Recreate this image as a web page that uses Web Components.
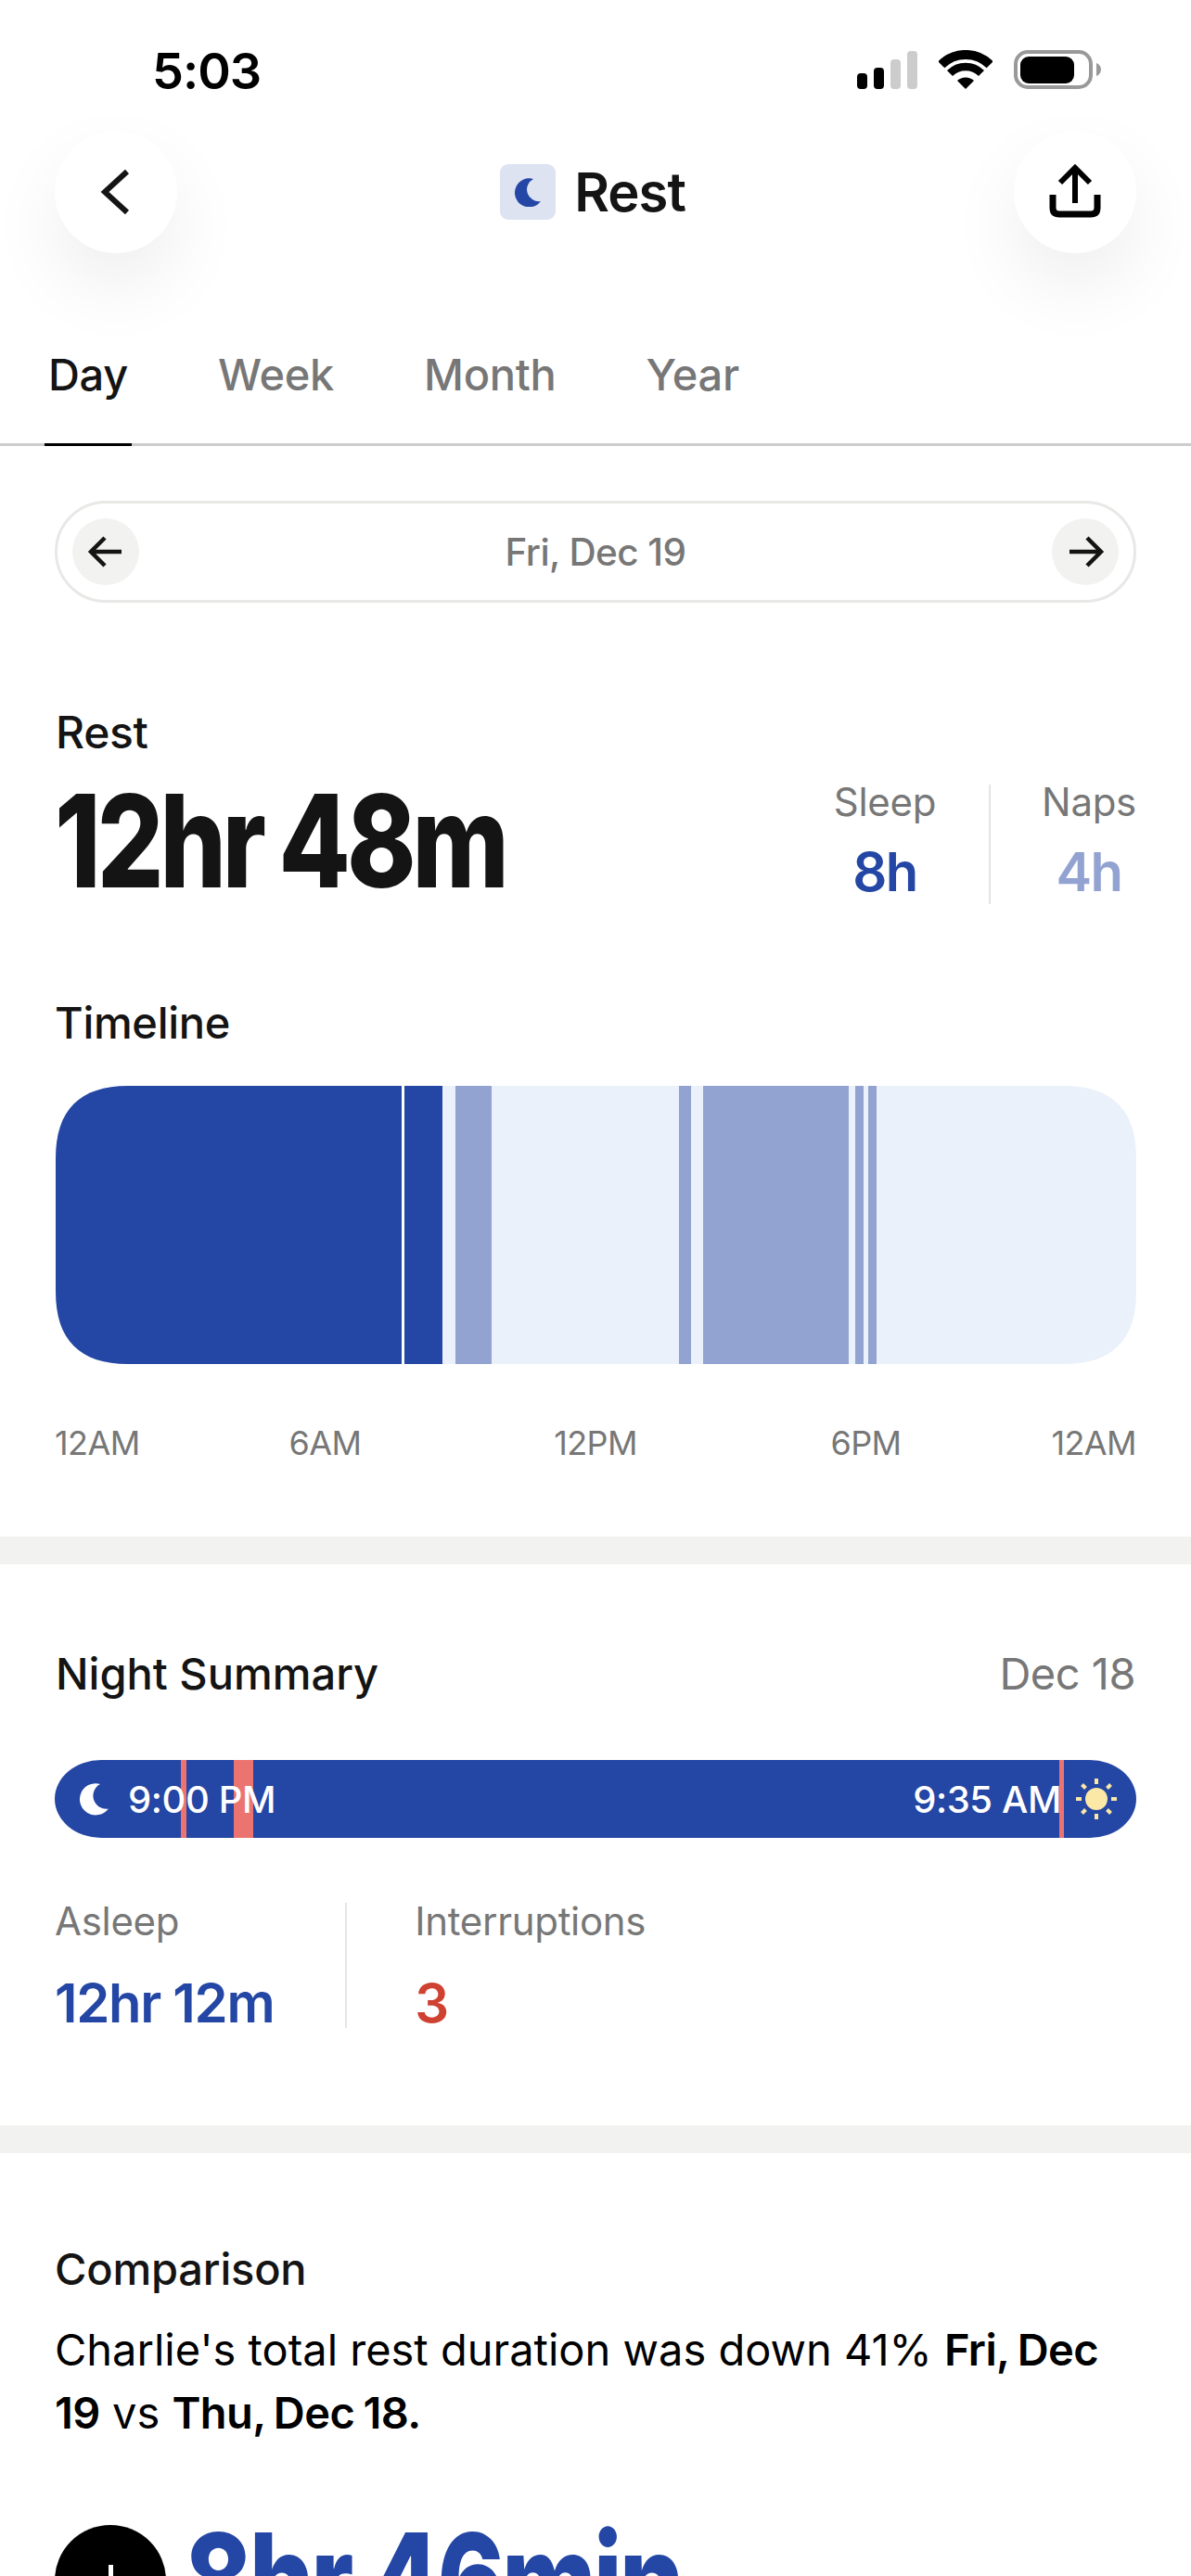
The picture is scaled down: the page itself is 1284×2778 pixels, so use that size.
<!DOCTYPE html>
<html>
<head>
<meta charset="utf-8">
<title>Rest</title>
<style>
  html, body { margin: 0; height: 2778px; overflow: hidden; background: #fff; }
  body { font-family: Inter, "Liberation Sans", sans-serif; color: #141414; }
  rest-page { display: block; }
</style>
</head>
<body>
<rest-page>
  <status-bar>5:03</status-bar>
  <nav-bar>Rest</nav-bar>
  <period-tabs></period-tabs>
  <date-pill>Fri, Dec 19</date-pill>
  <rest-summary></rest-summary>
  <band-gap></band-gap>
  <night-summary></night-summary>
  <band-gap></band-gap>
  <comparison-card>
    Charlie's total rest duration was down 41% <b>Fri, Dec</b> <b>19</b> vs <b>Thu, Dec 18.</b>
  </comparison-card>
</rest-page>

<script>
const MOON = 'M20 1A15.5 15.5 0 1 0 28 25A12.800 12.800 0 0 1 20 1Z';

class StatusBar extends HTMLElement {
  constructor() {
    super();
    this.attachShadow({ mode: 'open' });
    this.shadowRoot.innerHTML = `
      <style>
        :host { display: flex; justify-content: space-between; align-items: flex-start; box-sizing: border-box; height: 141px; padding: 48px 97px 0 164px; }
        .time { font-size: 54px; line-height: 58px; font-weight: 600; letter-spacing: -1px; color: #000; }
        .icons { display: flex; align-items: flex-start; gap: 23px; padding-top: 6px; }
        svg { display: block; }
      </style>
      <span class="time"><slot></slot></span>
      <div class="icons">
        <svg width="65" height="42" viewBox="0 0 65 42">
          <rect x="0" y="25" width="11" height="17" rx="4" fill="#000"/>
          <rect x="18" y="19" width="11" height="23" rx="4" fill="#000"/>
          <rect x="36" y="10" width="11" height="32" rx="4" fill="#ccc"/>
          <rect x="54" y="1" width="11" height="41" rx="4" fill="#ccc"/>
        </svg>
        <svg width="58" height="42" viewBox="0 0 58 42">
          <path d="M2.8 15.8A37 37 0 0 1 55.2 15.8" fill="none" stroke="#000" stroke-width="10"/>
          <path d="M12 25A24 24 0 0 1 46 25" fill="none" stroke="#000" stroke-width="8.5"/>
          <path d="M29 42L20 33A13 13 0 0 1 38 33Z" fill="#000"/>
        </svg>
        <svg width="94" height="42" viewBox="0 0 94 42">
          <rect x="2" y="2" width="81" height="38" rx="13" fill="none" stroke="#999" stroke-width="4"/>
          <rect x="7" y="7" width="58" height="29" rx="9" fill="#000"/>
          <path d="M89 14C92 15 94 18 94 21C94 24 92 27 89 28Z" fill="#999"/>
        </svg>
      </div>`;
  }
}
customElements.define('status-bar', StatusBar);

class NavBar extends HTMLElement {
  constructor() {
    super();
    this.attachShadow({ mode: 'open' });
    this.shadowRoot.innerHTML = `
      <style>
        :host { display: flex; justify-content: space-between; align-items: center; height: 132px; padding: 0 59px; }
        .round { width: 132px; height: 132px; border-radius: 50%; background: #fff; box-shadow: 0 36px 80px rgba(0,0,0,.07); display: flex; align-items: center; justify-content: center; }
        .title { display: flex; align-items: center; gap: 20px; margin-left: -6px; font-size: 58px; font-weight: 600; letter-spacing: -1px; line-height: 60px; }
        .badge { width: 60px; height: 60px; border-radius: 9px; background: #dee3f2; display: flex; align-items: center; justify-content: center; }
        svg { display: block; }
      </style>
      <div class="round">
        <svg width="132" height="132" viewBox="0 0 132 132"><path d="M78 44L54 66L78 88" fill="none" stroke="#141414" stroke-width="6"/></svg>
      </div>
      <div class="title">
        <span class="badge"><svg width="29" height="31" viewBox="0 0 29 31"><path d="${MOON}" fill="#2446a4"/></svg></span>
        <span><slot></slot></span>
      </div>
      <div class="round">
        <svg width="132" height="132" viewBox="0 0 132 132" fill="none" stroke="#000" stroke-width="6">
          <path d="M66 40V78"/>
          <path d="M50 56L66 40L82 56"/>
          <path d="M42 69V83Q42 90 49 90H83Q90 90 90 83V69" stroke-width="7"/>
        </svg>
      </div>`;
  }
}
customElements.define('nav-bar', NavBar);

class PeriodTabs extends HTMLElement {
  constructor() {
    super();
    this.attachShadow({ mode: 'open' });
    this.shadowRoot.innerHTML = `
      <style>
        :host { display: flex; gap: 89px; box-sizing: border-box; height: 208px; padding: 0 0 0 48px; border-bottom: 3px solid #ccc; align-items: flex-end; }
        .tab { font-size: 47px; line-height: 46px; color: #777; font-weight: 500; letter-spacing: -.3px; padding: 0 4px 51px; margin-bottom: -3px; border-bottom: 3px solid transparent; }
        .on { color: #141414; border-bottom-color: #000; }
      </style>
      <span class="tab on">Day</span>
      <span class="tab">Week</span>
      <span class="tab">Month</span>
      <span class="tab">Year</span>`;
  }
}
customElements.define('period-tabs', PeriodTabs);

class DatePill extends HTMLElement {
  constructor() {
    super();
    this.attachShadow({ mode: 'open' });
    this.shadowRoot.innerHTML = `
      <style>
        :host { display: flex; justify-content: space-between; align-items: center; box-sizing: border-box; height: 110px; margin: 59px 59px 0; padding: 0 16px; border: 3px solid #e8e8e6; border-radius: 55px; }
        .go { width: 72px; height: 72px; border-radius: 50%; background: #f2f2f0; }
        span { font-size: 40.500px; font-weight: 500; letter-spacing: -.6px; color: #777; }
        svg { display: block; }
      </style>
      <div class="go"><svg width="72" height="72" viewBox="0 0 72 72" fill="none" stroke="#141414" stroke-width="4.500"><path d="M53 36H21M35 21L20 36L35 51"/></svg></div>
      <span><slot></slot></span>
      <div class="go"><svg width="72" height="72" viewBox="0 0 72 72" fill="none" stroke="#141414" stroke-width="4.500"><path d="M19 36H52M38 21L53 36L38 51"/></svg></div>`;
  }
}
customElements.define('date-pill', DatePill);

class StatBlock extends HTMLElement {
  constructor() {
    super();
    this.attachShadow({ mode: 'open' });
    this.shadowRoot.innerHTML = `
      <style>
        :host { display: flex; flex-direction: column; align-items: var(--stat-align, center); }
        .label { font-size: 42px; line-height: 42px; color: #777; letter-spacing: -.3px; }
        .value { font-size: 58px; line-height: 58px; font-weight: 600; letter-spacing: var(--stat-track, -1.6px); margin-top: var(--stat-gap, 25px); }
      </style>
      <span class="label"></span>
      <span class="value"><slot></slot></span>`;
  }
  connectedCallback() {
    this.shadowRoot.querySelector('.label').textContent = this.getAttribute('label');
    this.shadowRoot.querySelector('.value').style.color = this.getAttribute('color');
  }
}
customElements.define('stat-block', StatBlock);

class TimelineChart extends HTMLElement {
  constructor() {
    super();
    this.attachShadow({ mode: 'open' });
    // [width in px, colour]
    const segs = [
      [373, '#2446a4'], [3, '#fff'], [41, '#2446a4'], [14, '#eaf1fb'], [39, '#92a3d1'],
      [202, '#eaf1fb'], [13, '#92a3d1'], [13, '#eaf1fb'], [157, '#92a3d1'], [7, '#eaf1fb'],
      [9, '#92a3d1'], [5, '#eaf1fb'], [9, '#92a3d1'], [280, '#eaf1fb']
    ];
    const bars = segs.map(s => `<i style="flex:${s[0]} 0 0;background:${s[1]}"></i>`).join('');
    this.shadowRoot.innerHTML = `
      <style>
        :host { display: block; margin-top: 46px; }
        .bar { display: flex; height: 300px; margin-left: 1px; clip-path: path('M78 0H1087C1139 0 1165 26 1165 78V222C1165 274 1139 300 1087 300H78C26 300 0 274 0 222V78C0 26 26 0 78 0Z'); }
        .ticks { display: grid; grid-template-columns: 1fr 2fr 2fr 2fr 1fr; margin-top: 68px; font-size: 36px; line-height: 34px; color: #777; letter-spacing: -.6px; text-align: center; }
        .ticks span:first-child { text-align: left; }
        .ticks span:last-child { text-align: right; }
      </style>
      <div class="bar">${bars}</div>
      <div class="ticks"><span>12AM</span><span>6AM</span><span>12PM</span><span>6PM</span><span>12AM</span></div>`;
  }
}
customElements.define('timeline-chart', TimelineChart);

class RestSummary extends HTMLElement {
  constructor() {
    super();
    this.attachShadow({ mode: 'open' });
    this.shadowRoot.innerHTML = `
      <style>
        :host { display: block; padding: 118px 59px 84px; }
        .name { font-size: 48px; line-height: 44px; font-weight: 500; letter-spacing: -.3px; padding-left: 1px; }
        .row { display: flex; justify-content: space-between; align-items: flex-start; margin-top: 25px; }
        .big { font-size: 139px; line-height: 139px; font-weight: 800; letter-spacing: -5px; word-spacing: -4px; display: inline-block; transform: scaleX(.81); transform-origin: left; white-space: nowrap; }
        .stats { display: flex; gap: 57px; margin-top: 9px; height: 129px; }
        .stats stat-block { margin-top: -2px; }
        .stats stat-block:last-child { margin-left: -2px; }
        .rule { width: 2px; background: #e5e5e5; }
        h3 { margin: 104px 0 0; font-size: 47px; line-height: 45px; font-weight: 500; letter-spacing: -.3px; }
      </style>
      <div class="name">Rest</div>
      <div class="row">
        <span class="big">12hr 48m</span>
        <div class="stats">
          <stat-block label="Sleep" color="#2446a4">8h</stat-block>
          <div class="rule"></div>
          <stat-block label="Naps" color="#92a3d1">4h</stat-block>
        </div>
      </div>
      <h3>Timeline</h3>
      <timeline-chart></timeline-chart>`;
  }
}
customElements.define('rest-summary', RestSummary);

class BandGap extends HTMLElement {
  constructor() {
    super();
    this.attachShadow({ mode: 'open' });
    this.shadowRoot.innerHTML = `<style>:host { display: block; height: 30px; background: #f2f2f0; }</style>`;
  }
}
customElements.define('band-gap', BandGap);

class NightBar extends HTMLElement {
  constructor() {
    super();
    this.attachShadow({ mode: 'open' });
    this.shadowRoot.innerHTML = `
      <style>
        :host { display: flex; justify-content: space-between; align-items: center; position: relative; height: 84px; margin-top: 71px; border-radius: 50px / 42px; background: #2446a4; overflow: hidden; padding: 0 21px 0 27px; }
        .side { display: flex; align-items: center; position: relative; z-index: 1; font-size: 40px; font-weight: 500; color: #fff; letter-spacing: -.4px; }
        .left { gap: 20px; }
        .right { gap: 16px; }
        i { position: absolute; top: 0; bottom: 0; background: #ec7470; }
        svg { display: block; }
      </style>
      <i style="left:136px;width:6px"></i>
      <i style="left:193px;width:21px"></i>
      <i style="left:1083px;width:5px"></i>
      <div class="side left">
        <svg width="32" height="36" viewBox="0 0 29 31"><path d="${MOON}" fill="#fff"/></svg>
        <span>9:00 PM</span>
      </div>
      <div class="side right">
        <span>9:35 AM</span>
        <svg width="44" height="44" viewBox="0 0 44 44" fill="#fbe8a6">
          <circle cx="22" cy="22" r="12"/>
          <g stroke="#fbe8a6" stroke-width="4">
            <path d="M22 0V6M22 38V44M0 22H6M38 22H44M6.500 6.500L10.500 10.500M33.500 33.500L37.500 37.500M37.500 6.500L33.500 10.500M10.500 33.500L6.500 37.500"/>
          </g>
        </svg>
      </div>`;
  }
}
customElements.define('night-bar', NightBar);

class NightSummary extends HTMLElement {
  constructor() {
    super();
    this.attachShadow({ mode: 'open' });
    this.shadowRoot.innerHTML = `
      <style>
        :host { display: block; padding: 95px 59px 105px; }
        .head { display: flex; justify-content: space-between; font-size: 47px; line-height: 45px; }
        .head b { font-weight: 500; padding-left: 1px; }
        .head span { color: #777; letter-spacing: -.5px; padding-right: 1px; }
        .stats { display: flex; height: 135px; margin-top: 70px; --stat-align: flex-start; --stat-gap: 38px; --stat-track: -1.300px; }
        .stats stat-block { margin-top: -1px; }
        .rule { width: 2px; background: #e5e5e5; margin: 0 73px 0 77px; }
      </style>
      <div class="head"><b>Night Summary</b><span>Dec 18</span></div>
      <night-bar></night-bar>
      <div class="stats">
        <stat-block label="Asleep" color="#2446a4">12hr 12m</stat-block>
        <div class="rule"></div>
        <stat-block label="Interruptions" color="#cf4232">3</stat-block>
      </div>`;
  }
}
customElements.define('night-summary', NightSummary);

class ComparisonCard extends HTMLElement {
  constructor() {
    super();
    this.attachShadow({ mode: 'open' });
    this.shadowRoot.innerHTML = `
      <style>
        :host { display: block; padding: 102px 59px 0; }
        h3 { margin: 0; font-size: 47px; line-height: 45px; font-weight: 500; letter-spacing: -.2px; }
        p { margin: 31px 0 0; font-size: 47px; line-height: 68px; color: #000; }
        ::slotted(b) { font-weight: 600; letter-spacing: -.6px; word-spacing: -2px; }
        .total { display: flex; gap: 20px; align-items: flex-start; margin-top: 76px; }
        .plus { flex: none; width: 120px; height: 120px; margin-top: 11px; border-radius: 50%; background: #000; }
        svg { display: block; }
        .num { font-size: 139px; line-height: 139px; font-weight: 800; color: #2446a4; letter-spacing: -4px; white-space: nowrap; display: inline-block; transform: scaleX(.79); transform-origin: left; }
      </style>
      <h3>Comparison</h3>
      <p><slot></slot></p>
      <div class="total">
        <div class="plus"><svg width="120" height="120" viewBox="0 0 120 120" stroke="#fff" stroke-width="5"><path d="M60.500 43V77M44 60H77"/></svg></div>
        <span class="num">8hr 46min</span>
      </div>`;
  }
}
customElements.define('comparison-card', ComparisonCard);

class RestPage extends HTMLElement {
  constructor() {
    super();
    this.attachShadow({ mode: 'open' });
    this.shadowRoot.innerHTML = `<style>:host { display: block; }</style><slot></slot>`;
  }
}
customElements.define('rest-page', RestPage);
</script>
</body>
</html>
